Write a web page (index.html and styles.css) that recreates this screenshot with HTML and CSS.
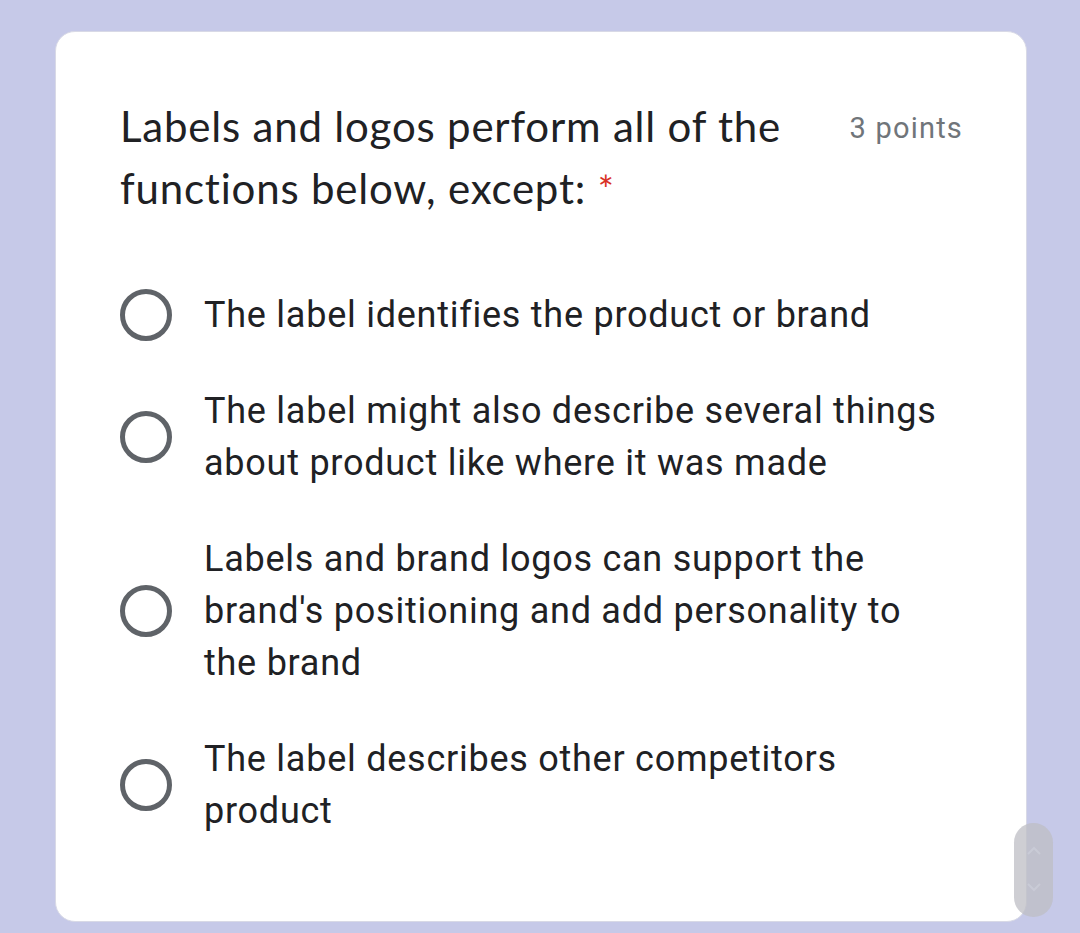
FILE: index.html
```html
<!DOCTYPE html>
<html lang="en">
<head>
<meta charset="utf-8">
<title>Question</title>
<link rel="stylesheet" href="styles.css">
</head>
<body>
<div class="page">
  <div class="card">
    <div class="header">
      <div class="title">Labels and logos perform all of the functions below, except: <span class="req">*</span></div>
      <div class="points">3 points</div>
    </div>
    <div class="options">
      <label class="option">
        <span class="radio"></span>
        <span class="text">The label identifies the product or brand</span>
      </label>
      <label class="option">
        <span class="radio"></span>
        <span class="text">The label might also describe several things about product like where it was made</span>
      </label>
      <label class="option">
        <span class="radio"></span>
        <span class="text">Labels and brand logos can support the brand's positioning and add personality to the brand</span>
      </label>
      <label class="option">
        <span class="radio"></span>
        <span class="text">The label describes other competitors product</span>
      </label>
    </div>
  </div>
  <div class="scroller">
    <svg width="20" height="60" viewBox="0 0 20 60">
      <path d="M4 14 L10 8 L16 14" fill="none" stroke="#c9cbd6" stroke-width="2"/>
      <path d="M4 44 L10 50 L16 44" fill="none" stroke="#c9cbd6" stroke-width="2"/>
    </svg>
  </div>
</div>
</body>
</html>
```
FILE: styles.css
```css
html, body {
  margin: 0;
  padding: 0;
}
body {
  background: #c6c9e8;
  width: 1080px;
  height: 933px;
  overflow: hidden;
}
.page {
  position: relative;
  padding: 31px 53px 0 55px;
}
.card {
  background: #ffffff;
  border: 1px solid #d8d9e6;
  border-radius: 20px;
  height: 891px;
  box-sizing: border-box;
  padding: 63px 63px 0 64px;
}
.header {
  display: flex;
  justify-content: space-between;
  align-items: flex-start;
}
.title {
  font-family: "Lato", "Open Sans", sans-serif;
  font-size: 42px;
  letter-spacing: 0.8px;
  line-height: 62px;
  color: #202124;
  width: 700px;
}
.req {
  color: #d93025;
  font-size: 38px;
  line-height: 1;
}
.points {
  font-family: "Roboto", sans-serif;
  font-size: 29px;
  letter-spacing: 1.2px;
  line-height: 62px;
  color: #70757a;
  padding-top: 2px;
}
.options {
  display: flex;
  flex-direction: column;
  margin-top: 70px;
  gap: 44px;
}
.option {
  display: flex;
  align-items: center;
}
.radio {
  flex: 0 0 auto;
  width: 42px;
  height: 42px;
  border: 5px solid #5f6368;
  border-radius: 50%;
  margin-right: 32px;
}
.text {
  font-family: "Roboto", sans-serif;
  font-size: 36px;
  letter-spacing: 0.75px;
  line-height: 52px;
  color: #202124;
  width: 745px;
}
.scroller {
  position: absolute;
  left: 1014px;
  top: 823px;
  width: 39px;
  height: 94px;
  border-radius: 20px;
  background: rgba(190, 190, 196, 0.75);
  display: flex;
  align-items: center;
  justify-content: center;
}
```
